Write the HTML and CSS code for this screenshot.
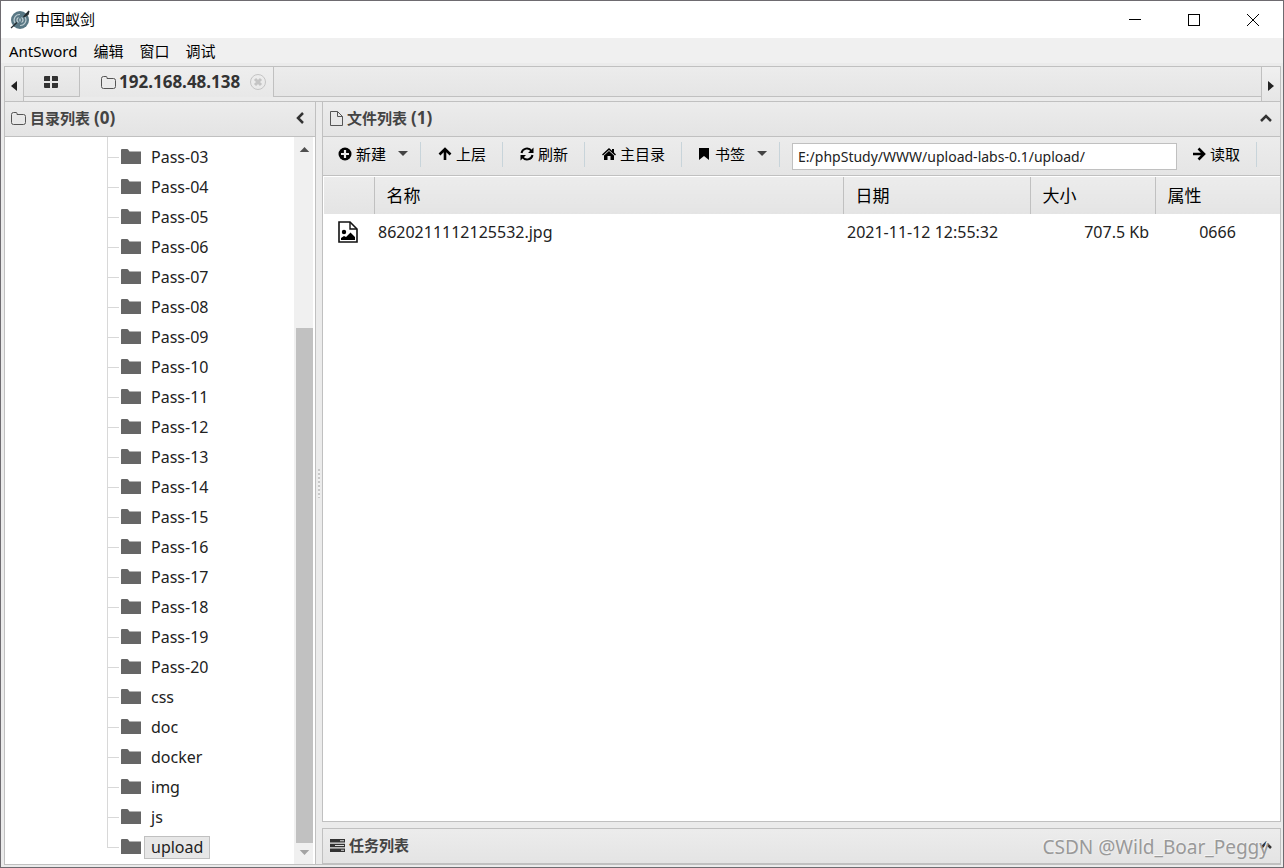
FILE: index.html
```
<!DOCTYPE html>
<html lang="zh-CN">
<head>
<meta charset="utf-8">
<title>中国蚁剑</title>
<link rel="stylesheet" href="styles.css">
</head>
<body>
<div class="window">
  <header class="titlebar">
    <svg class="logo" viewBox="0 0 20 20"><circle cx="10" cy="10" r="9" fill="#587784"/><path d="M5 13a5.500 5.500 0 0 1 5-8.500M15 7a5.500 5.500 0 0 1-5 8.500" fill="none" stroke="#b9c8ce" stroke-width="1.200"/><path d="M8.500 12.500a2.800 2.800 0 0 1 0-5M11.500 7.500a2.800 2.800 0 0 1 0 5M10 8.500v3" fill="none" stroke="#c4d0d5" stroke-width="1.300"/><path d="M1 18l6-5.500M13.500 7L19 1l-1 3.500z" fill="#252c30" stroke="#252c30" stroke-width="1.200"/></svg>
    <h1 class="app-name">中国蚁剑</h1>
    <div class="window-controls">
      <button class="win-btn" aria-label="最小化"><svg viewBox="0 0 12 12"><path d="M0 5.500h12"/></svg></button>
      <button class="win-btn" aria-label="最大化"><svg viewBox="0 0 12 12"><path d="M.5.5h11v11H.5z"/></svg></button>
      <button class="win-btn" aria-label="关闭"><svg viewBox="0 0 12 12"><path d="M0 0l12 12M12 0L0 12"/></svg></button>
    </div>
  </header>
  <nav class="menubar">
    <button>AntSword</button><button>编辑</button><button>窗口</button><button>调试</button>
  </nav>
  <main class="workspace">
    <div class="tabbar">
      <button class="tab-arrow" aria-label="向左"><svg viewBox="0 0 6 10"><path d="M6 0v10L0 5z"/></svg></button>
      <div class="tabs">
        <button class="tab home" aria-label="主页"><svg viewBox="0 0 14 12"><path d="M0 1q0-1 1-1h5v5H0zM8 0h5q1 0 1 1v4H8zM0 7h6v5H1q-1 0-1-1zM8 7h6v4q0 1-1 1H8z"/></svg></button>
        <div class="tab active">
          <svg class="folder-o" viewBox="0 0 15 13"><path d="M.5 10.500v-8q0-2 2-2H5q1 0 1 1v1h6.500q2 0 2 2v6q0 2-2 2h-10q-2 0-2-2z"/></svg>
          <span>192.168.48.138</span>
          <button class="close" aria-label="关闭标签"><svg viewBox="0 0 16 16"><circle cx="8" cy="8" r="7.500"/><path d="M5 5l6 6M11 5l-6 6"/></svg></button>
        </div>
        <div class="tab-fill"></div>
      </div>
      <button class="tab-arrow right" aria-label="向右"><svg viewBox="0 0 6 10"><path d="M0 0v10l6-5z"/></svg></button>
    </div>
    <div class="panes">
      <section class="dir-pane">
        <div class="pane-head">
          <svg class="folder-o" viewBox="0 0 15 13"><path d="M.5 10.500v-8q0-2 2-2H5q1 0 1 1v1h6.500q2 0 2 2v6q0 2-2 2h-10q-2 0-2-2z"/></svg>
          <h2>目录列表 <span class="count">(0)</span></h2>
          <button class="toggle" aria-label="折叠"><svg class="chev-left" viewBox="0 0 8 12"><path d="M7 1L2 6l5 5"/></svg></button>
        </div>
        <div class="tree-wrap">
          <ul class="tree" id="tree"></ul>
          <div class="scrollbar"><span class="up"></span><span class="thumb"></span><span class="down"></span></div>
        </div>
      </section>
      <div class="splitter"><span class="grip"></span></div>
      <div class="right-pane">
        <section class="file-pane">
          <div class="pane-head">
            <svg class="file-o" viewBox="0 0 13 15"><path d="M.5.5h7l5 5v9H.5zM7.500.5v5h5"/></svg>
            <h2>文件列表 <span class="count">(1)</span></h2>
            <button class="toggle" aria-label="折叠"><svg class="chev-up" viewBox="0 0 12 8"><path d="M1 7l5-5 5 5"/></svg></button>
          </div>
          <div class="toolbar">
            <button class="tool"><svg viewBox="0 0 14 14"><circle cx="7" cy="7" r="6.500"/><path d="M7 3v8M3 7h8" stroke="#e9e9e9" stroke-width="2.200"/></svg>新建<span class="caret"></span></button>
            <button class="tool"><svg viewBox="0 0 14 14"><path d="M7 13V3M1.500 7.500L7 2l5.500 5.500" fill="none" stroke="#000" stroke-width="2.600"/></svg>上层</button>
            <button class="tool"><svg viewBox="0 0 14 14"><path d="M1.500 6a5.500 5.500 0 0 1 10-2M12.500 8a5.500 5.500 0 0 1-10 2" fill="none" stroke="#000" stroke-width="2"/><path d="M13.500.5V6H8zM.5 13.500V8H6z"/></svg>刷新</button>
            <button class="tool"><svg viewBox="0 0 14 14"><path d="M0 7.500L7 1l3 2.800V2h2v3.600l2 1.900-1 1-6-5.500-6 5.500zM2 8.500l5-4.500 5 4.500V13H8.500V9h-3v4H2z"/></svg>主目录</button>
            <button class="tool mark"><svg viewBox="0 0 14 14"><path d="M2 1h10v12L7 9l-5 4z"/></svg>书签<span class="caret"></span></button>
            <input class="path" aria-label="路径" value="E:/phpStudy/WWW/upload-labs-0.1/upload/">
            <button class="tool go"><svg viewBox="0 0 14 14"><path d="M1 7h10M6.500 1.500L12 7l-5.500 5.500" fill="none" stroke="#000" stroke-width="2.600"/></svg>读取</button>
          </div>
          <table class="files">
            <colgroup><col class="c-icon"><col><col class="c-date"><col class="c-size"><col class="c-attr"></colgroup>
            <thead><tr><th aria-label="类型"></th><th>名称</th><th>日期</th><th>大小</th><th>属性</th></tr></thead>
            <tbody><tr>
              <td class="t-icon"><svg viewBox="0 0 20 22"><path d="M1 1h11l7 7v13H1z" fill="#fff" stroke="#111" stroke-width="1.600"/><path d="M12 1v7h7" fill="none" stroke="#111" stroke-width="1.400"/><circle cx="6" cy="11" r="2.200"/><path d="M3 19v-2l3-2 2 1 4.500-4.500L17 16v3z"/></svg></td>
              <td>8620211112125532.jpg</td><td>2021-11-12 12:55:32</td><td class="t-size">707.5 Kb</td><td class="t-attr">0666</td>
            </tr></tbody>
          </table>
        </section>
        <section class="task-pane">
          <div class="pane-head">
            <svg class="tasks" viewBox="0 0 15 13"><path d="M0 0h15v3.500H0zM0 4.700h15v3.500H0zM0 9.400h15V13H0z" fill="#333"/><path d="M10 1.200h4v1h-4zM5 6h9v1H5zM11 10.700h3v1h-3z" fill="#ddd"/></svg>
            <h2>任务列表</h2>
            <button class="toggle" aria-label="展开"><svg class="chev-up" viewBox="0 0 12 8"><path d="M1 7l5-5 5 5"/></svg></button>
          </div>
        </section>
      </div>
    </div>
  </main>
  <div class="watermark">CSDN @Wild_Boar_Peggy</div>
</div>
<script src="tree.js"></script>
</body>
</html>
```
FILE: tree.js
```
const names = [];
for (let i = 3; i <= 20; i++) names.push('Pass-' + String(i).padStart(2, '0'));
names.push('css', 'doc', 'docker', 'img', 'js', 'upload');
document.getElementById('tree').innerHTML = names.map(n =>
  `<li><span class="branch"></span><svg class="folder" viewBox="0 0 20 16"><path d="M0 1q0-1 1-1h5q1 0 1.500 1l1 1.500H20V15H0z"/></svg><a href="#"${n === 'upload' ? ' class="selected"' : ''}>${n}</a></li>`
).join('');
```
FILE: styles.css
```
* { box-sizing: border-box; }
body {
  margin: 0;
  font: 16px/20px "Noto Sans", "Noto Sans CJK SC", sans-serif;
  color: #222;
}
button { font: inherit; color: inherit; border: 0; padding: 0; background: none; }
svg { display: block; flex: none; }
h1, h2 { margin: 0; }
.window {
  position: relative;
  display: flex;
  flex-direction: column;
  height: 100vh;
  border: 1px solid #6e6b70;
  background: #ebebeb;
}
.titlebar { display: flex; align-items: center; height: 37px; background: #fff; padding-left: 9px; }
.logo { width: 20px; height: 20px; }
.app-name { margin-left: 5px; padding-bottom: 2px; font-size: 15px; font-weight: 400; color: #000; }
.window-controls { display: flex; margin-left: auto; padding-right: 1px; }
.win-btn { display: flex; width: 59px; height: 35px; align-items: center; justify-content: center; }
.win-btn svg { width: 12px; height: 12px; fill: none; stroke: #000; shape-rendering: crispEdges; }
.menubar {
  display: flex;
  gap: 16px;
  height: 25px;
  padding-left: 8px;
  background: #f0f0f0;
  color: #000;
  font-size: 15px;
}
.workspace { display: flex; flex-direction: column; flex: 1; min-height: 0; padding: 3px 2px 2px 3px; }
.tabbar {
  display: flex;
  flex: none;
  height: 35px;
  border: 1px solid #c0c0c0;
  border-bottom: 0;
}
.tab-arrow { display: flex; align-items: center; justify-content: center; width: 19px; border-right: 1px solid #c0c0c0; background: linear-gradient(#f0f0f0, #e6e6e6); padding-top: 3px; }
.tab-arrow.right { border-right: 0; border-left: 1px solid #c0c0c0; }
.tab-arrow svg { width: 6px; height: 10px; fill: #222; }
.tabs { display: flex; flex: 1; height: 30px; }
.tab { display: flex; align-items: center; border-right: 1px solid #c0c0c0; }
.home { width: 56px; justify-content: center; padding-right: 2px; border-bottom: 1px solid #c0c0c0; background: linear-gradient(#ececec, #e4e4e4); }
.home svg { width: 14px; height: 12px; fill: #333; }
.active { width: 194px; padding-left: 21px; font-size: 17px; font-weight: 700; color: #333; background: linear-gradient(#eee, #e8e8e8); }
.active span { margin-left: 3px; padding-bottom: 1px; }
.close { margin-left: auto; margin-right: 7px; }
.close svg { width: 16px; height: 16px; fill: none; stroke: #c4c4c4; }
.close path { stroke-width: 3; }
.tab-fill { flex: 1; border-bottom: 1px solid #c0c0c0; background: linear-gradient(#ececec, #e5e5e5); }
.folder-o, .file-o { fill: none; stroke: #555; }
.folder-o { width: 15px; height: 13px; }
.file-o { width: 13px; height: 15px; }
.panes { display: flex; flex: 1; min-height: 0; border: 1px solid #c0c0c0; border-width: 1px 0 1px 1px; }
.dir-pane { display: flex; flex-direction: column; width: 311px; flex: none; border-right: 1px solid #c0c0c0; }
.pane-head {
  display: flex;
  flex: none;
  align-items: center;
  height: 35px;
  padding: 0 8px 2px 6px;
  border-bottom: 1px solid #c0c0c0;
  background: linear-gradient(#ececec, #e4e4e4);
}
.right-pane .pane-head { padding-left: 7px; }
.pane-head h2 { margin-left: 4px; font-size: 15px; font-weight: 700; color: #444; }
.count { font-size: 17px; }
.toggle { margin-left: auto; }
.toggle svg { fill: none; stroke: #333; stroke-width: 2.5px; }
.chev-left { width: 8px; height: 12px; margin-right: 3px; }
.chev-up { width: 12px; height: 8px; }
.tree-wrap { display: flex; flex: 1; min-height: 0; background: #fff; padding-right: 2px; }
.tree { flex: 1; margin: 0; padding: 6px 0 0 102px; list-style: none; overflow: hidden; }
.tree li { display: flex; align-items: center; height: 30px; color: #222; }
.branch { width: 12px; height: 30px; border-left: 1px solid #d8d8d8; background: linear-gradient(#d8d8d8, #d8d8d8) 0 14px / 100% 1px no-repeat; }
.tree li:first-child .branch { height: 36px; margin-top: -6px; background-position: 0 20px; }
.tree li:last-child .branch { height: 15px; margin-bottom: 15px; }
.folder { width: 20px; height: 16px; margin: -2px 3px 0 2px; fill: #666; }
.tree a { margin-bottom: 1px; padding: 0 6px 1px; border: 1px solid transparent; color: inherit; text-decoration: none; }
.tree .selected { background: #e7e7e7; border-color: #c0c0c0; }
.scrollbar { display: flex; flex-direction: column; align-items: flex-end; width: 19px; background: #f0f0f0; }
.up, .down { width: 17px; flex: none; background: #505050; }
.up { height: 5px; margin-top: 10px; margin-bottom: 176px; clip-path: polygon(50% 0, 78% 100%, 22% 100%); }
.thumb { width: 17px; flex: 1; background: #c1c1c1; }
.down { height: 5px; margin: 7px 0 9px; background: #a3a3a3; clip-path: polygon(22% 0, 78% 0, 50% 100%); }
.splitter { display: flex; align-items: center; justify-content: center; width: 6px; flex: none; }
.grip { width: 2px; height: 29px; background: repeating-linear-gradient(#c8c8c8 0 2px, #f2f2f2 2px 4px); }
.right-pane { display: flex; flex: 1; flex-direction: column; gap: 6px; min-width: 0; }
.file-pane { flex: 1; display: flex; flex-direction: column; border: 1px solid #c0c0c0; border-top: 0; background: #fff; }
.toolbar {
  display: flex;
  flex: none;
  align-items: flex-start;
  height: 39px;
  padding: 6px 0;
  border-bottom: 1px solid #c0c0c0;
  background: linear-gradient(#ececec, #e5e5e5);
}
.tool { display: flex; flex: none; align-items: center; height: 25px; margin-top: -1px; padding: 0 16px 2px 17px; color: #000; font-size: 15px; border-right: 1px solid #c8d4da; }
.tool:first-child, .mark { padding-left: 15px; }
.tool svg { width: 14px; height: 14px; margin-right: 4px; }
.caret { width: 10px; height: 5px; margin-left: 12px; margin-right: -4px; background: #444; clip-path: polygon(0 0, 100% 0, 50% 100%); }
.path { flex: 1; min-width: 80px; height: 27px; margin-left: 12px; padding: 0 5px; border: 1px solid #c0c0c0; background: #fff; font: 14px/20px "Noto Sans", sans-serif; color: #222; }
.go { margin-right: 23px; padding-left: 15px; }
.files { width: calc(100% - 1px); margin: 1px 0 0 1px; table-layout: fixed; border-collapse: collapse; }
.c-icon { width: 50px; }
.c-date { width: 187px; }
.c-size, .c-attr { width: 125px; }
.files th { height: 37px; padding: 0 12px; border-right: 1px solid #c0c0c0; background: linear-gradient(#ececec, #e4e4e4); font-size: 17px; font-weight: 400; text-align: left; color: #000; }
.files th:last-child { border-right: 0; }
.files td { height: 35px; padding: 0 4px; white-space: nowrap; }
.files .t-icon { padding-left: 14px; }
.t-icon svg { width: 20px; height: 22px; }
.files .t-size { text-align: right; padding-right: 6px; }
.files .t-attr { text-align: center; }
.task-pane { flex: none; border: 1px solid #c0c0c0; border-bottom: 0; }
.tasks { width: 15px; height: 13px; }
.watermark { position: absolute; right: 14px; bottom: 6px; font-size: 19px; line-height: 28px; color: #999; text-shadow: -1px -1px 0 #f4f4f4; }
```
